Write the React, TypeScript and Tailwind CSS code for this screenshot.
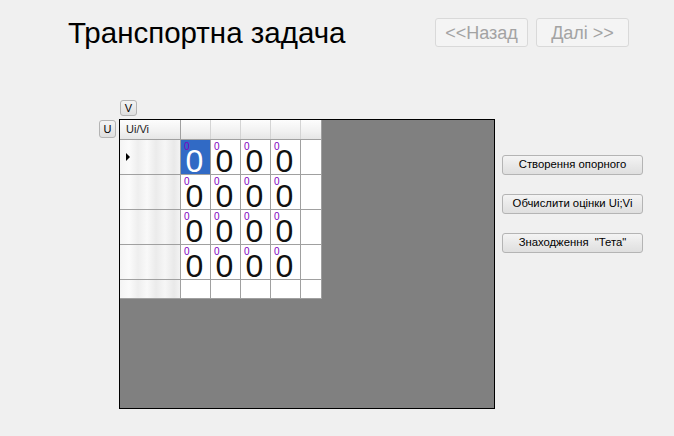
const cols = [0, 1, 2, 3];
const rows = [0, 1, 2, 3];

const stripes =
  "bg-[linear-gradient(to_right,#f4f4f4,#fbfbfb_15%,#eeeeee_30%,#f9f9f9_45%,#ebebeb_60%,#f6f6f6_75%,#e9e9e9_90%,#f3f3f3)]";

function SmallButton({ label, className = "" }: { label: string; className?: string }) {
  return (
    <button
      className={
        "flex items-center justify-center rounded-[3px] border border-[#b4b4b4] bg-[linear-gradient(#f4f4f4,#e9e9e9_50%,#dfdfdf)] leading-none text-black " +
        className
      }
    >
      {label}
    </button>
  );
}

function NavButton({ label }: { label: string }) {
  return (
    <button className="flex h-[29px] w-[93px] items-center justify-center rounded-[3px] border border-[#d9d9d9] bg-[#f4f4f4] text-[18px] leading-none text-[#a3a3a3]">
      {label}
    </button>
  );
}

function Cell({ selected }: { selected?: boolean }) {
  return (
    <div
      className={
        "flex h-full w-[30px] items-start border-r border-[#a0a0a0] pl-[3px] " +
        (selected ? "bg-[#316ac5] text-white" : "bg-white text-[#111]")
      }
    >
      <span className="mt-[3px] text-[10px] leading-[7px] text-[#8000c0]">0</span>
      <span className="-ml-[4px] mt-[10px] text-[32px] leading-[23px]">0</span>
    </div>
  );
}

export default function App() {
  return (
    <div className="h-[436px] w-[674px] overflow-hidden bg-[#f0f0f0] font-['Liberation_Sans',Arial,sans-serif] text-black">
      {/* top bar */}
      <div className="flex h-[100px] items-start pt-[16px]">
        <h1 className="ml-[68px] text-[29.5px] font-normal leading-[1.15]">Транспортна задача</h1>
        <div className="ml-auto mr-[45px] mt-[2px] flex gap-[8px]">
          <NavButton label="<<Назад" />
          <NavButton label="Далі >>" />
        </div>
      </div>

      <div className="flex items-start">
        <div className="flex flex-col">
          <SmallButton label="V" className="ml-[120px] h-[16px] w-[17px] text-[11px]" />
          <div className="mt-[3px] flex items-start">
            <SmallButton label="U" className="ml-[99px] mt-[1px] h-[18px] w-[17px] text-[11px]" />
            <div className="ml-[3px] h-[290px] w-[376px] border border-black bg-[#808080]">
              <div className="flex w-[202px] flex-col bg-white">
                {/* header row */}
                <div className="flex h-[20px] border-b border-[#a0a0a0] bg-[linear-gradient(#fdfdfd,#f1f1f1_60%,#e6e6e6)]">
                  <div className="flex w-[61px] items-center border-r border-[#a0a0a0] pl-[6px] text-[11px] text-[#222]">
                    Ui/Vi
                  </div>
                  {cols.map((c) => (
                    <div key={c} className="w-[30px] border-r border-[#d4d4d4]" />
                  ))}
                  <div className="w-[21px] border-r border-[#a0a0a0]" />
                </div>

                {rows.map((r) => (
                  <div key={r} className="flex h-[35px] border-b border-[#a0a0a0]">
                    <div className={"flex w-[61px] items-center border-r border-[#a0a0a0] pl-[6px] " + stripes}>
                      {r === 0 && (
                        <span className="h-0 w-0 border-y-[4px] border-l-[4px] border-y-transparent border-l-black" />
                      )}
                    </div>
                    {cols.map((c) => (
                      <Cell key={c} selected={r === 0 && c === 0} />
                    ))}
                    <div className="w-[21px] border-r border-[#a0a0a0] bg-white" />
                  </div>
                ))}

                <div className="flex h-[19px] border-b border-[#a0a0a0]">
                  <div className={"w-[61px] border-r border-[#a0a0a0] " + stripes} />
                  {cols.map((c) => (
                    <div key={c} className="w-[30px] border-r border-[#a0a0a0] bg-white" />
                  ))}
                  <div className="w-[21px] border-r border-[#a0a0a0] bg-white" />
                </div>
              </div>
            </div>
          </div>
        </div>

        <div className="ml-[7px] mt-[55px] flex flex-col gap-[19px]">
          <SmallButton label="Створення опорного" className="h-[20px] w-[141px] text-[11.3px]" />
          <SmallButton label="Обчислити оцінки Ui;Vi" className="h-[20px] w-[141px] text-[11.3px]" />
          <SmallButton label={'Знаходження  "Тета"'} className="h-[20px] w-[141px] whitespace-pre text-[11.3px]" />
        </div>
      </div>
    </div>
  );
}
